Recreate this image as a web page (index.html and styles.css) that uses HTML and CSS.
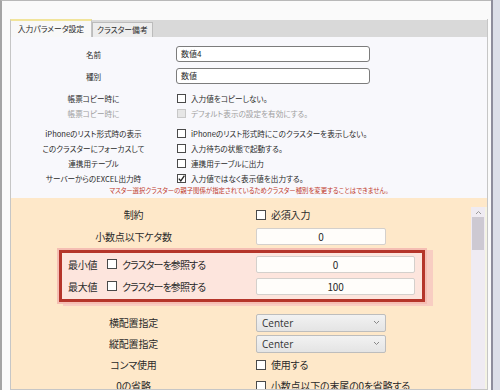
FILE: index.html
```html
<!DOCTYPE html>
<html>
<head>
    <title>入力パラメータ設定</title>
    <meta charset="utf-8">
    <link rel="stylesheet" href="styles.css">
</head>
<body>
    <div class="window">
        <div class="main">
            <div class="tabs">
                <div class="tab active">入力パラメータ設定</div>
                <div class="tab">クラスター備考</div>
            </div>
            <div class="panel">
                <div class="basic">
                    <div class="row tall">
                        <div class="label">名前</div>
                        <div class="field"><div class="textbox">数値4</div></div>
                    </div>
                    <div class="row tall">
                        <div class="label">種別</div>
                        <div class="field"><div class="textbox">数値</div></div>
                    </div>
                    <div class="row first-check">
                        <div class="label">帳票コピー時に</div>
                        <div class="field"><span class="check"></span>入力値をコピーしない。</div>
                    </div>
                    <div class="row disabled">
                        <div class="label">帳票コピー時に</div>
                        <div class="field"><span class="check"></span>デフォルト表示の設定を有効にする。</div>
                    </div>
                    <div class="row group-start">
                        <div class="label">iPhoneのリスト形式時の表示</div>
                        <div class="field"><span class="check"></span>iPhoneのリスト形式時にこのクラスターを表示しない。</div>
                    </div>
                    <div class="row">
                        <div class="label">このクラスターにフォーカスして</div>
                        <div class="field"><span class="check"></span>入力待ちの状態で起動する。</div>
                    </div>
                    <div class="row">
                        <div class="label">連携用テーブル</div>
                        <div class="field"><span class="check"></span>連携用テーブルに出力</div>
                    </div>
                    <div class="row">
                        <div class="label">サーバーからのEXCEL出力時</div>
                        <div class="field">
                            <span class="check"><svg width="9" height="9" viewBox="0 0 9 9"><path d="M1.8 4.6 L3.8 6.9 L7.4 1.6" fill="none" stroke="#222" stroke-width="1.3"/></svg></span>入力値ではなく表示値を出力する。
                        </div>
                    </div>
                    <div class="notice">マスター選択クラスターの親子関係が指定されているためクラスター種別を変更することはできません。</div>
                </div>

                <div class="detail">
                    <div class="detail-body">
                        <div class="row wide first">
                            <div class="label">制約</div>
                            <div class="field"><span class="check"></span>必須入力</div>
                        </div>
                        <div class="row wide num-row">
                            <div class="label">小数点以下ケタ数</div>
                            <div class="field"><div class="numbox">0</div></div>
                        </div>

                        <div class="range-box">
                            <div class="range-row">
                                <div class="range-label">最小値</div>
                                <div class="range-ref"><span class="check"></span>クラスターを参照する</div>
                                <div class="numbox long">0</div>
                            </div>
                            <div class="range-row">
                                <div class="range-label">最大値</div>
                                <div class="range-ref"><span class="check"></span>クラスターを参照する</div>
                                <div class="numbox long">100</div>
                            </div>
                        </div>

                        <div class="row wide after-box">
                            <div class="label">横配置指定</div>
                            <div class="field">
                                <div class="select">Center<svg width="7" height="5" viewBox="0 0 7 5"><path d="M1 1 L3.5 3.5 L6 1" fill="none" stroke="#888" stroke-width="1"/></svg></div>
                            </div>
                        </div>
                        <div class="row wide">
                            <div class="label">縦配置指定</div>
                            <div class="field">
                                <div class="select">Center<svg width="7" height="5" viewBox="0 0 7 5"><path d="M1 1 L3.5 3.5 L6 1" fill="none" stroke="#888" stroke-width="1"/></svg></div>
                            </div>
                        </div>
                        <div class="row wide">
                            <div class="label">コンマ使用</div>
                            <div class="field"><span class="check"></span>使用する</div>
                        </div>
                        <div class="row wide">
                            <div class="label">0の省略</div>
                            <div class="field"><span class="check"></span>小数点以下の末尾の0を省略する</div>
                        </div>
                    </div>
                    <div class="scrollbar">
                        <div class="scroll-up"><svg width="7" height="5" viewBox="0 0 7 5"><path d="M1 4 L3.5 1.5 L6 4" fill="none" stroke="#999" stroke-width="1"/></svg></div>
                        <div class="thumb"></div>
                    </div>
                </div>
            </div>
        </div>
        <div class="edge"></div>
    </div>
</body>
</html>
```

FILE: styles.css
```css
body {
    margin: 0;
    background-color: #fafafa;
    font-family: "Noto Sans CJK JP", "Noto Sans", sans-serif;
    font-size: 10px;
    font-feature-settings: "palt";
    color: #2a2a2a;
}
.window {
    display: flex;
    width: 500px;
    height: 390px;
    overflow: hidden;
}
.main {
    flex: 1;
    display: flex;
    flex-direction: column;
    border-left: 2px solid #a4a4a4;
    border-top: 1px solid #b8b8b8;
    padding: 18px 3px 0 8px;
    min-width: 0;
}
.edge {
    width: 7px;
    border-left: 2px solid #8e8e9c;
    background-color: #dcdfe8;
}

/* tabs */
.tabs {
    display: flex;
    align-items: flex-end;
    height: 18px;
    background: linear-gradient(#fafafa 1px, #d9d9d9 1px);
    border-right: 1px solid #c6c6c6;
    font-size: 7.8px;
    white-space: nowrap;
}
.tab {
    height: 14px;
    line-height: 14px;
    padding: 0 4px;
    background-color: #ededed;
    border: 1px solid #bcbcbc;
    border-bottom: none;
}
.tab.active {
    height: 16px;
    line-height: 16px;
    width: 80px;
    padding: 0;
    background-color: #f8f8f8;
    border-color: #c4c4c4;
    border-top: 2px solid #f1e49a;
    text-align: center;
}

/* panel */
.panel {
    flex: 1;
    display: flex;
    flex-direction: column;
    background-color: #f8f8fc;
    border: 1px solid #c6c6c6;
    border-top: none;
    min-height: 0;
}
.basic {
    padding-top: 6px;
    font-size: 7.6px;
}
.row {
    display: flex;
    align-items: center;
    height: 15px;
}
.row.tall {
    height: 22px;
}
.row.first-check {
    margin-top: 4px;
}
.row.group-start {
    margin-top: 5px;
}
.label {
    width: 165px;
    flex-shrink: 0;
    text-align: center;
    white-space: nowrap;
}
.field {
    display: flex;
    align-items: center;
    white-space: nowrap;
}
.disabled {
    color: #a0a0a0;
}
.check {
    display: inline-block;
    width: 10px;
    height: 10px;
    box-sizing: border-box;
    border: 1px solid #4a4a4a;
    background-color: #fff;
    margin-right: 5px;
    flex-shrink: 0;
}
.basic .check {
    width: 9px;
    height: 9px;
    margin-left: 1px;
}
.check svg {
    display: block;
    margin: -1px;
}
.disabled .check {
    border-color: #c8c8c8;
    background-color: #e6e6e6;
}
.textbox {
    width: 194px;
    height: 16px;
    box-sizing: border-box;
    border: 1px solid #7c7c7c;
    border-radius: 3px;
    background-color: #fff;
    padding-left: 4px;
    line-height: 14px;
    font-size: 8px;
}
.notice {
    height: 9px;
    line-height: 9px;
    text-align: center;
    font-size: 6.4px;
    color: #c0392b;
}

/* detail (orange) */
.detail {
    flex: 1;
    display: flex;
    margin-top: 3px;
    background-color: #fee8c9;
    min-height: 0;
    overflow: hidden;
    letter-spacing: -0.2px;
}
.detail-body {
    flex: 1;
    padding-top: 6px;
}
.row.wide {
    height: 21px;
}
.row.wide .label {
    width: 245px;
}
.row.num-row {
    height: 22px;
}
.row.after-box {
    margin-top: 10px;
}
.numbox {
    width: 130px;
    height: 17px;
    box-sizing: border-box;
    border: 1px solid #d4d0cc;
    border-radius: 2px;
    background-color: #fffdfa;
    text-align: center;
    line-height: 15px;
}
.numbox.long {
    width: 159px;
}
.select {
    display: flex;
    align-items: center;
    justify-content: space-between;
    width: 130px;
    height: 18px;
    box-sizing: border-box;
    border: 1px solid #bdbdbd;
    border-radius: 2px;
    background: linear-gradient(#f2f2f2, #e4e4e4);
    padding: 0 5px;
    font-family: "Open Sans", "Noto Sans", sans-serif;
    font-size: 10px;
    letter-spacing: 0;
    color: #333;
}

/* min / max box */
.range-box {
    margin: 3px 0 0 48px;
    width: 366px;
    box-sizing: border-box;
    border: 3px solid #b5352a;
    background-color: #fde5dd;
    box-shadow: 0 0 0 2px #f5beb3, 6px 2px 0 2px #f8cdc2;
    padding: 0 7px 2px 6px;
}
.range-row {
    display: flex;
    align-items: center;
    height: 22px;
}
.range-label {
    width: 39px;
}
.range-ref {
    display: flex;
    align-items: center;
    width: 149px;
    white-space: nowrap;
    letter-spacing: -0.9px;
}

/* scrollbar */
.scrollbar {
    width: 14px;
    margin-top: 9px;
    background-color: #efebf2;
    border-right: 2px solid #f4f3e4;
}
.scroll-up {
    height: 10px;
    display: flex;
    justify-content: center;
    align-items: center;
}
.thumb {
    height: 33px;
    margin: 0 1px;
    background-color: #cdc9d2;
}
```
